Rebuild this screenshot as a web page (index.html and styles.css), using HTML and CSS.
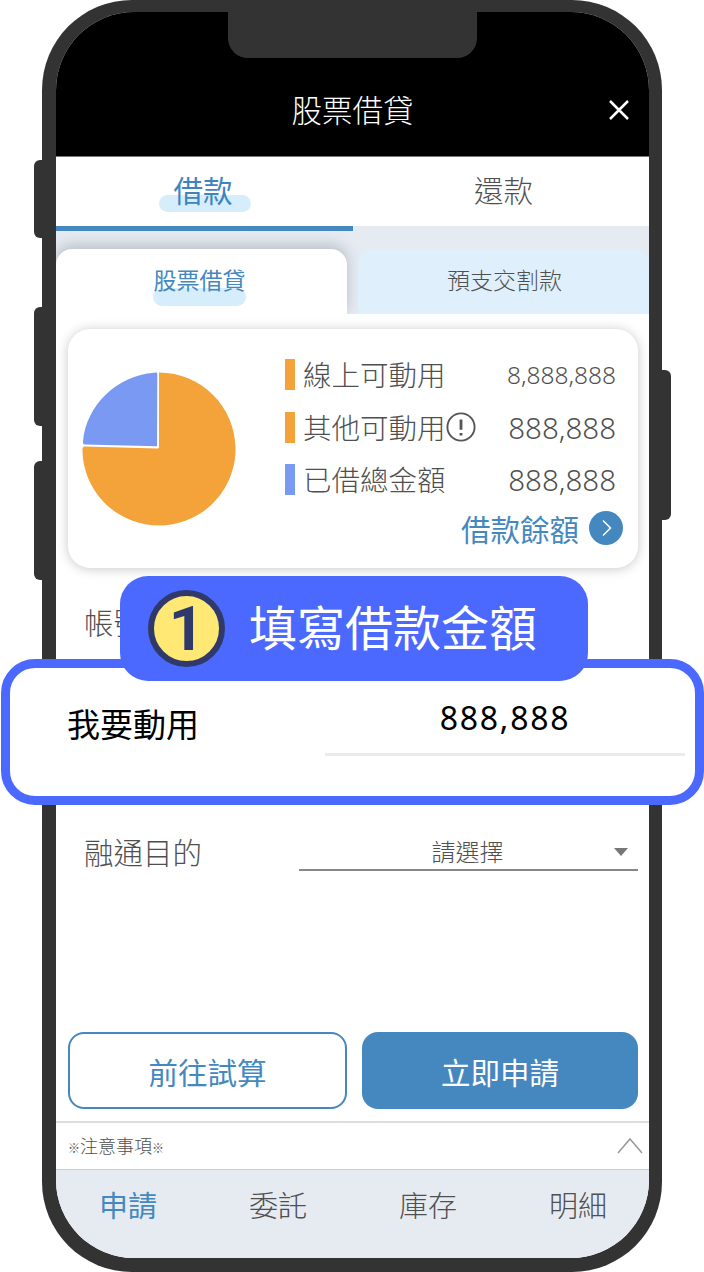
FILE: index.html
```html
<!DOCTYPE html>
<html lang="zh-Hant">
<head>
<meta charset="utf-8">
<title>股票借貸</title>
<link rel="stylesheet" href="styles.css">
</head>
<body>
<div class="stage">
  <div class="phone">
    <span class="side side-a"></span>
    <span class="side side-b"></span>
    <span class="side side-c"></span>
    <span class="side side-d"></span>
    <div class="screen">
      <header class="topbar">
        <h1 class="topbar-title">股票借貸</h1>
        <svg class="close" viewBox="0 0 20 20" aria-hidden="true"><path d="M1 1 19 19M19 1 1 19"/></svg>
      </header>
      <nav class="tabs">
        <div class="tab tab-on"><span class="mark mark-lg">借款</span></div>
        <div class="tab tab-off">還款</div>
      </nav>
      <div class="subtabs">
        <div class="subtab subtab-on"><span class="mark mark-sm">股票借貸</span></div>
        <div class="subtab subtab-off">預支交割款</div>
      </div>
      <main class="body">
        <section class="card">
          <svg class="pie" viewBox="0 0 160 160" aria-hidden="true">
            <path class="slice-o" d="M80 2.500C122.800 2.500 157.500 37.200 157.500 80S122.800 157.500 80 157.500 2.500 122.800 2.500 80C2.500 78.500 3.500 77.500 5 77.500L78 79.500C79.500 79.500 80 79 80 78Z"/>
            <path class="slice-b" d="M78 2.500C78 2.500 78.300 4 78.300 5L78 77.200 5 75.500C3.500 75.500 2.800 74.500 3 73 6 35 38 5.500 75 2.700 76.500 2.500 78 2.500 78 2.500Z"/>
          </svg>
          <div class="legend">
            <div class="legend-row">
              <span class="bar bar-o"></span><span class="legend-name">線上可動用</span><span class="legend-val legend-val-sm">8,888,888</span>
            </div>
            <div class="legend-row">
              <span class="bar bar-o"></span><span class="legend-name">其他可動用</span>
              <svg class="info" viewBox="0 0 32 32" aria-hidden="true"><circle cx="16" cy="16" r="14.500"/><path d="M16 8v11M16 22.500v2.500"/></svg>
              <span class="legend-val">888,888</span>
            </div>
            <div class="legend-row">
              <span class="bar bar-b"></span><span class="legend-name">已借總金額</span><span class="legend-val">888,888</span>
            </div>
            <div class="balance">
              <span>借款餘額</span>
              <svg class="go" viewBox="0 0 34 34" aria-hidden="true"><circle cx="17" cy="17" r="17"/><path d="M14 9.500 21.500 17 14 24.500"/></svg>
            </div>
          </div>
        </section>
        <div class="row row-account"><span class="row-label">帳號</span></div>
        <div class="row row-purpose">
          <span class="row-label row-label-up">融通目的</span>
          <div class="select"><span class="select-text">請選擇</span><span class="caret"></span></div>
        </div>
        <div class="actions">
          <button class="btn btn-line">前往試算</button>
          <button class="btn btn-fill">立即申請</button>
        </div>
        <div class="notes">
          <span class="notes-text"><span class="ref-mark">※</span>注意事項<span class="ref-mark">※</span></span>
          <svg class="chev" viewBox="0 0 26 17" aria-hidden="true"><path d="M1 16 13 2 25 16"/></svg>
        </div>
      </main>
      <nav class="bottom">
        <span class="bottom-item bottom-on">申請</span>
        <span class="bottom-item">委託</span>
        <span class="bottom-item">庫存</span>
        <span class="bottom-item">明細</span>
      </nav>
    </div>
    <div class="notch"></div>
  </div>
  <div class="highlight">
    <span class="hl-label">我要動用</span>
    <div class="hl-field"><span class="hl-value">888,888</span></div>
  </div>
  <div class="bubble">
    <span class="step">1</span>
    <span class="bubble-text">填寫借款金額</span>
  </div>
</div>
</body>
</html>
```
FILE: styles.css
```css
* { box-sizing: border-box; }
html, body { margin: 0; padding: 0; background: #fff; }
body { font-family: "Noto Sans CJK TC", "Noto Sans", sans-serif; font-weight: 300; color: #4f4f4f; }
.stage { position: relative; width: 704px; height: 1272px; overflow: hidden; }

.phone { position: relative; width: 620px; height: 1272px; margin-left: 42px; background: #333; border-radius: 90px; padding: 12px 13px 14px 14px; }
.side { position: absolute; background: #333; }
.side-a { left: -8px; top: 160px; width: 10px; height: 78px; border-radius: 6px 0 0 6px; }
.side-b { left: -8px; top: 307px; width: 10px; height: 119px; border-radius: 6px 0 0 6px; }
.side-c { left: -8px; top: 461px; width: 10px; height: 119px; border-radius: 6px 0 0 6px; }
.side-d { right: -9px; top: 370px; width: 11px; height: 150px; border-radius: 0 6px 6px 0; }
.notch { position: absolute; left: 186px; top: 12px; width: 249px; height: 46px; background: #333; border-radius: 0 0 20px 20px; }

.screen { display: flex; flex-direction: column; height: 1246px; background: #fff; border-radius: 78px; overflow: hidden; }

.topbar { position: relative; display: flex; flex: none; align-items: center; justify-content: center; height: 145px; padding-top: 49px; background: #000; border-bottom: 1px solid #777; }
.topbar-title { margin: 0; font-size: 30.500px; line-height: 40px; font-weight: 300; color: #fff; }
.close { position: absolute; right: 20px; top: 88px; width: 20px; height: 20px; }
.close path { fill: none; stroke: #fff; stroke-width: 2.500; }

.tabs { display: flex; flex: none; height: 74px; background: #e6ebf2; }
.tab { display: flex; flex: none; justify-content: center; height: 69px; padding-top: 13px; background: #fff; font-size: 29.500px; line-height: 38px; }
.tab-on { width: 297px; height: 74px; padding-right: 3px; border-bottom: 5px solid #4488bf; color: #3d85c0; font-weight: 400; }
.tab-off { width: 296px; padding-left: 5px; }
.mark { position: relative; z-index: 0; display: block; text-align: center; }
.mark::after { content: ""; position: absolute; z-index: -1; background: #d6eefc; }
.mark-lg::after { left: -14px; right: -18px; top: 25px; height: 17px; border-radius: 9px; }
.mark-sm { color: #4488bf; font-weight: 400; }
.mark-sm::after { left: -1px; right: 0; top: 24px; height: 18px; border-radius: 9px; }

.subtabs { display: flex; flex: none; gap: 11px; height: 83px; padding-top: 18px; background: #e6ebf2; }
.subtab { display: flex; flex: none; justify-content: center; height: 65px; padding-top: 15px; font-size: 23px; line-height: 30px; border-radius: 16px 16px 0 0; }
.subtab-on { width: 291px; padding-right: 4px; background: #fff; box-shadow: 0 -4px 14px rgba(70, 75, 90, .28); }
.subtab-off { width: 291px; padding-left: 2px; background: #dfeffb; }

.body { display: flex; flex: 1; flex-direction: column; min-height: 0; padding-top: 15px; background: #fff; }

.card { display: flex; flex: none; align-items: flex-start; width: 570px; height: 239px; margin-left: 12px; padding: 0 22px 0 12px; background: #fff; border-radius: 22px; box-shadow: 0 1px 12px rgba(0, 0, 0, .22); }
.pie { flex: none; width: 158px; height: 158px; margin-top: 41px; }
.slice-o { fill: #f3a33a; }
.slice-b { fill: #7a99f3; }
.legend { flex: 1; display: flex; flex-direction: column; margin: 30px 0 0 47px; }
.legend-row { display: flex; align-items: center; height: 31px; margin-bottom: 21.500px; }
.bar { flex: none; width: 10px; height: 31px; }
.bar-o { background: #f3a33a; }
.bar-b { background: #7a99f3; }
.legend-name { margin: -2px 0 0 8px; font-size: 28.500px; line-height: 31px; white-space: nowrap; }
.info { flex: none; width: 30px; height: 30px; margin-left: 0; }
.info circle { fill: none; stroke: #555; stroke-width: 2; }
.info path { fill: none; stroke: #555; stroke-width: 3; }
.legend-val { margin-left: auto; font-family: "Noto Sans", sans-serif; font-size: 29.500px; line-height: 31px; font-weight: 300; }
.legend-val-sm { font-size: 24.500px; }
.balance { display: flex; align-items: center; justify-content: flex-end; gap: 10px; height: 34px; margin: -6px -7px 0 0; font-size: 29.500px; line-height: 34px; font-weight: 400; color: #4488bf; }
.go { flex: none; width: 34px; height: 34px; }
.go circle { fill: #4488bf; }
.go path { fill: none; stroke: #fff; stroke-width: 1.500; }

.row { display: flex; flex: none; align-items: center; padding: 0 11px 0 28px; }
.row-label { font-size: 29.500px; line-height: 38px; white-space: nowrap; }
.row-label-up { margin-top: -2px; }
.row-account { height: 38px; margin-top: 34px; }
.row-purpose { height: 38px; margin-top: 193px; }
.select { position: relative; display: flex; flex: none; align-items: center; justify-content: center; width: 339px; height: 38px; margin: 0 0 0 auto; padding-right: 2px; border-bottom: 2px solid #888; }
.select-text { font-size: 24px; line-height: 32px; }
.caret { position: absolute; right: 10px; top: 15px; border-style: solid; border-width: 8px 7px 0; border-color: #777 transparent transparent; }

.actions { display: flex; flex: none; gap: 15px; margin: 161px 11px 0 12px; }
.btn { flex: 1; height: 77px; padding: 0; font: inherit; font-size: 29.500px; line-height: 40px; border-radius: 16px; }
.btn-line { flex: none; width: 279px; background: #fff; border: 2px solid #4488bf; color: #4488bf; font-weight: 400; }
.btn-fill { background: #4488bf; border: 0; color: #fff; font-weight: 400; }

.notes { display: flex; flex: none; align-items: center; justify-content: space-between; height: 49px; margin-top: 12px; padding: 0 6px 0 12px; border-top: 2px solid #ddd; border-bottom: 1px solid #ccc; }
.notes-text { font-size: 18px; line-height: 24px; }
.ref-mark { font-size: 12px; }
.chev { flex: none; width: 26px; height: 17px; margin-top: -1px; }
.chev path { fill: none; stroke: #999; stroke-width: 1.500; }

.bottom { display: flex; flex: none; gap: 92px; height: 88px; padding: 15px 0 0 43px; background: #e6ebf2; }
.bottom-item { flex: none; width: 58px; height: 40px; font-size: 29px; line-height: 38px; white-space: nowrap; }
.bottom-on { color: #4488bf; font-weight: 400; }

.highlight { position: absolute; left: 1px; top: 659px; display: flex; width: 703px; height: 146px; padding: 0 10px 0 57px; background: #fff; border: 9px solid #4c69ff; border-radius: 34px; }
.hl-label { margin-top: 35px; font-size: 33px; line-height: 40px; color: #000; font-weight: 400; white-space: nowrap; }
.hl-field { display: flex; justify-content: center; width: 360px; height: 88px; margin: 0 0 0 auto; padding: 29px 0 0 0; border-bottom: 3px solid #ebebeb; }
.hl-value { font-family: "Noto Sans", sans-serif; font-size: 32px; line-height: 42px; letter-spacing: 1.700px; color: #000; font-weight: 400; }

.bubble { position: absolute; left: 120px; top: 576px; display: flex; align-items: center; width: 468px; height: 105px; padding: 0 0 0 28px; background: #4c69ff; border-radius: 28px; }
.step { display: flex; flex: none; align-items: center; justify-content: center; width: 77px; height: 77px; font-family: "Roboto", sans-serif; font-size: 62px; font-weight: 700; line-height: 1; color: #2f3a6b; background: #ffe874; border: 6px solid #2f3a6b; border-radius: 50%; }
.bubble-text { margin: -8px 0 0 24px; font-size: 48px; line-height: 60px; color: #fff; font-weight: 400; white-space: nowrap; }
```
